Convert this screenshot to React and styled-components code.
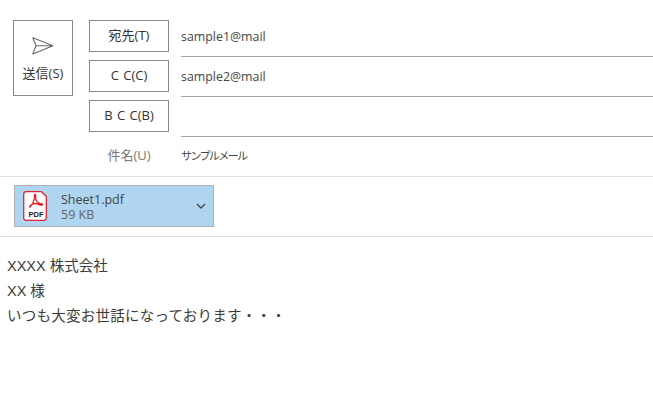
import React from 'react';
import styled, { createGlobalStyle } from 'styled-components';

const Global = createGlobalStyle`
  html, body { margin: 0; padding: 0; background: #fff; }
  body { font-family: "Open Sans", "Noto Sans CJK JP", sans-serif; color: #444; overflow: hidden; }
`;
const Page = styled.div`width: 653px; height: 418px; display: flex; flex-direction: column;`;
const Header = styled.div`
  display: flex; gap: 16px; padding: 20px 0 0 13px; height: 156px;
  border-bottom: 1px solid #e1e1e1;
`;
const SendButton = styled.div`
  width: 60px; height: 76px; box-sizing: border-box; border: 1px solid #8a8a8a;
  display: flex; flex-direction: column; align-items: center; font-size: 13px; color: #333;
  padding-top: 16px; gap: 10px; line-height: 16px; white-space: nowrap;
`;
const Fields = styled.div`flex: 1; display: flex; flex-direction: column; gap: 8px;`;
const Row = styled.div`display: flex; height: 32px; gap: 12px;`;
const AddressButton = styled.div`
  width: 80px; height: 32px; box-sizing: border-box; border: 1px solid #8a8a8a; padding-bottom: 3px;
  display: flex; align-items: center; justify-content: center; font-size: 13px; color: #333;
  word-spacing: 1px; white-space: pre;
`;
const Input = styled.div`
  flex: 1; height: 37px; box-sizing: border-box; border-bottom: 1px solid #a6a6a6;
  font-size: 12.4px; line-height: 34px; color: #444;
`;
const SubjectRow = styled.div`display: flex; height: 32px; gap: 12px; align-items: center; padding-bottom: 3px; box-sizing: border-box;`;
const SubjectLabel = styled.div`width: 80px; text-align: center; font-size: 13px; color: #777;`;
const SubjectText = styled.div`
  font-size: 11px; color: #444; letter-spacing: -1.6px; white-space: nowrap;
`;
const AttachBar = styled.div`
  height: 60px; box-sizing: border-box; padding: 8px 0 0 14px; border-bottom: 1px solid #e1e1e1;
`;
const Attachment = styled.div`
  width: 200px; height: 42px; box-sizing: border-box; background: #afd5f0; border: 1px solid #b0b0b0;
  display: flex; align-items: center; padding-left: 8px;
`;
const FileInfo = styled.div`
  flex: 1; margin-left: 14px; padding-top: 2px; display: flex; flex-direction: column;
  font-size: 12.5px; line-height: 15px;
`;
const FileName = styled.div`color: #444;`;
const FileSize = styled.div`color: #666;`;
const Chevron = styled.svg`margin-right: 7px;`;
const Body = styled.div`
  padding: 17px 0 0 7px; font-size: 14.5px; line-height: 25px; color: #3c3c3c;
  font-family: "Liberation Sans", "Noto Sans CJK JP", sans-serif;
`;
const Line = styled.div`letter-spacing: ${p => p.$spacing || 0}px;`;

const SendIcon = () => (
  <svg width="22" height="18" viewBox="0 0 22 18" fill="none" stroke="#6a6a6a" strokeWidth="1.1">
    <path d="M0.800 0.800 L21 8.800 L0.800 17 L4 8.800 Z M4 8.800 L21 8.800" strokeLinejoin="round" />
  </svg>
);
const PdfIcon = () => (
  <svg width="24" height="30" viewBox="0 0 24 30">
    <path d="M3 .7h15.500l4.800 4.800v21.300a2.500 2.500 0 0 1-2.500 2.500H3a2.400 2.400 0 0 1-2.300-2.500V3A2.400 2.400 0 0 1 3 .7z" fill="#fff" stroke="#e8222a" strokeWidth="1.300" />
    <path d="M7 16C9 14 11 10 11.500 7C11.800 4.500 11 3.500 12 3.500C13 3.500 12.800 5.500 12.500 7C13 10 15 12 17 12.500C19 12.800 19.800 13 19.500 13.800C19 14.500 17 14 15 13C12 12 10 12.500 8 14C7 15 6 16 7 16Z" fill="none" stroke="#e8222a" strokeWidth="1.400" />
    <text x="13" y="25.500" textAnchor="middle" fontSize="7.500" fontWeight="700" fontFamily="Liberation Sans, sans-serif" fill="#222">PDF</text>
  </svg>
);

export default function App() {
  return (
    <Page>
      <Global />
      <Header>
        <SendButton><SendIcon />送信(S)</SendButton>
        <Fields>
          <Row><AddressButton>宛先(T)</AddressButton><Input>sample1@mail</Input></Row>
          <Row><AddressButton>C C(C)</AddressButton><Input>sample2@mail</Input></Row>
          <Row><AddressButton>B C C(B)</AddressButton><Input /></Row>
          <SubjectRow><SubjectLabel>件名(U)</SubjectLabel><SubjectText>サンプルメール</SubjectText></SubjectRow>
        </Fields>
      </Header>
      <AttachBar>
        <Attachment>
          <PdfIcon />
          <FileInfo><FileName>Sheet1.pdf</FileName><FileSize>59 KB</FileSize></FileInfo>
          <Chevron width="10" height="6" viewBox="0 0 10 6" fill="none" stroke="#444" strokeWidth="1.300"><path d="M1 1l4 4 4-4" /></Chevron>
        </Attachment>
      </AttachBar>
      <Body>
        <Line>XXXX 株式会社</Line>
        <Line>XX 様</Line>
        <Line $spacing={0.25}>いつも大変お世話になっております・・・</Line>
      </Body>
    </Page>
  );
}
